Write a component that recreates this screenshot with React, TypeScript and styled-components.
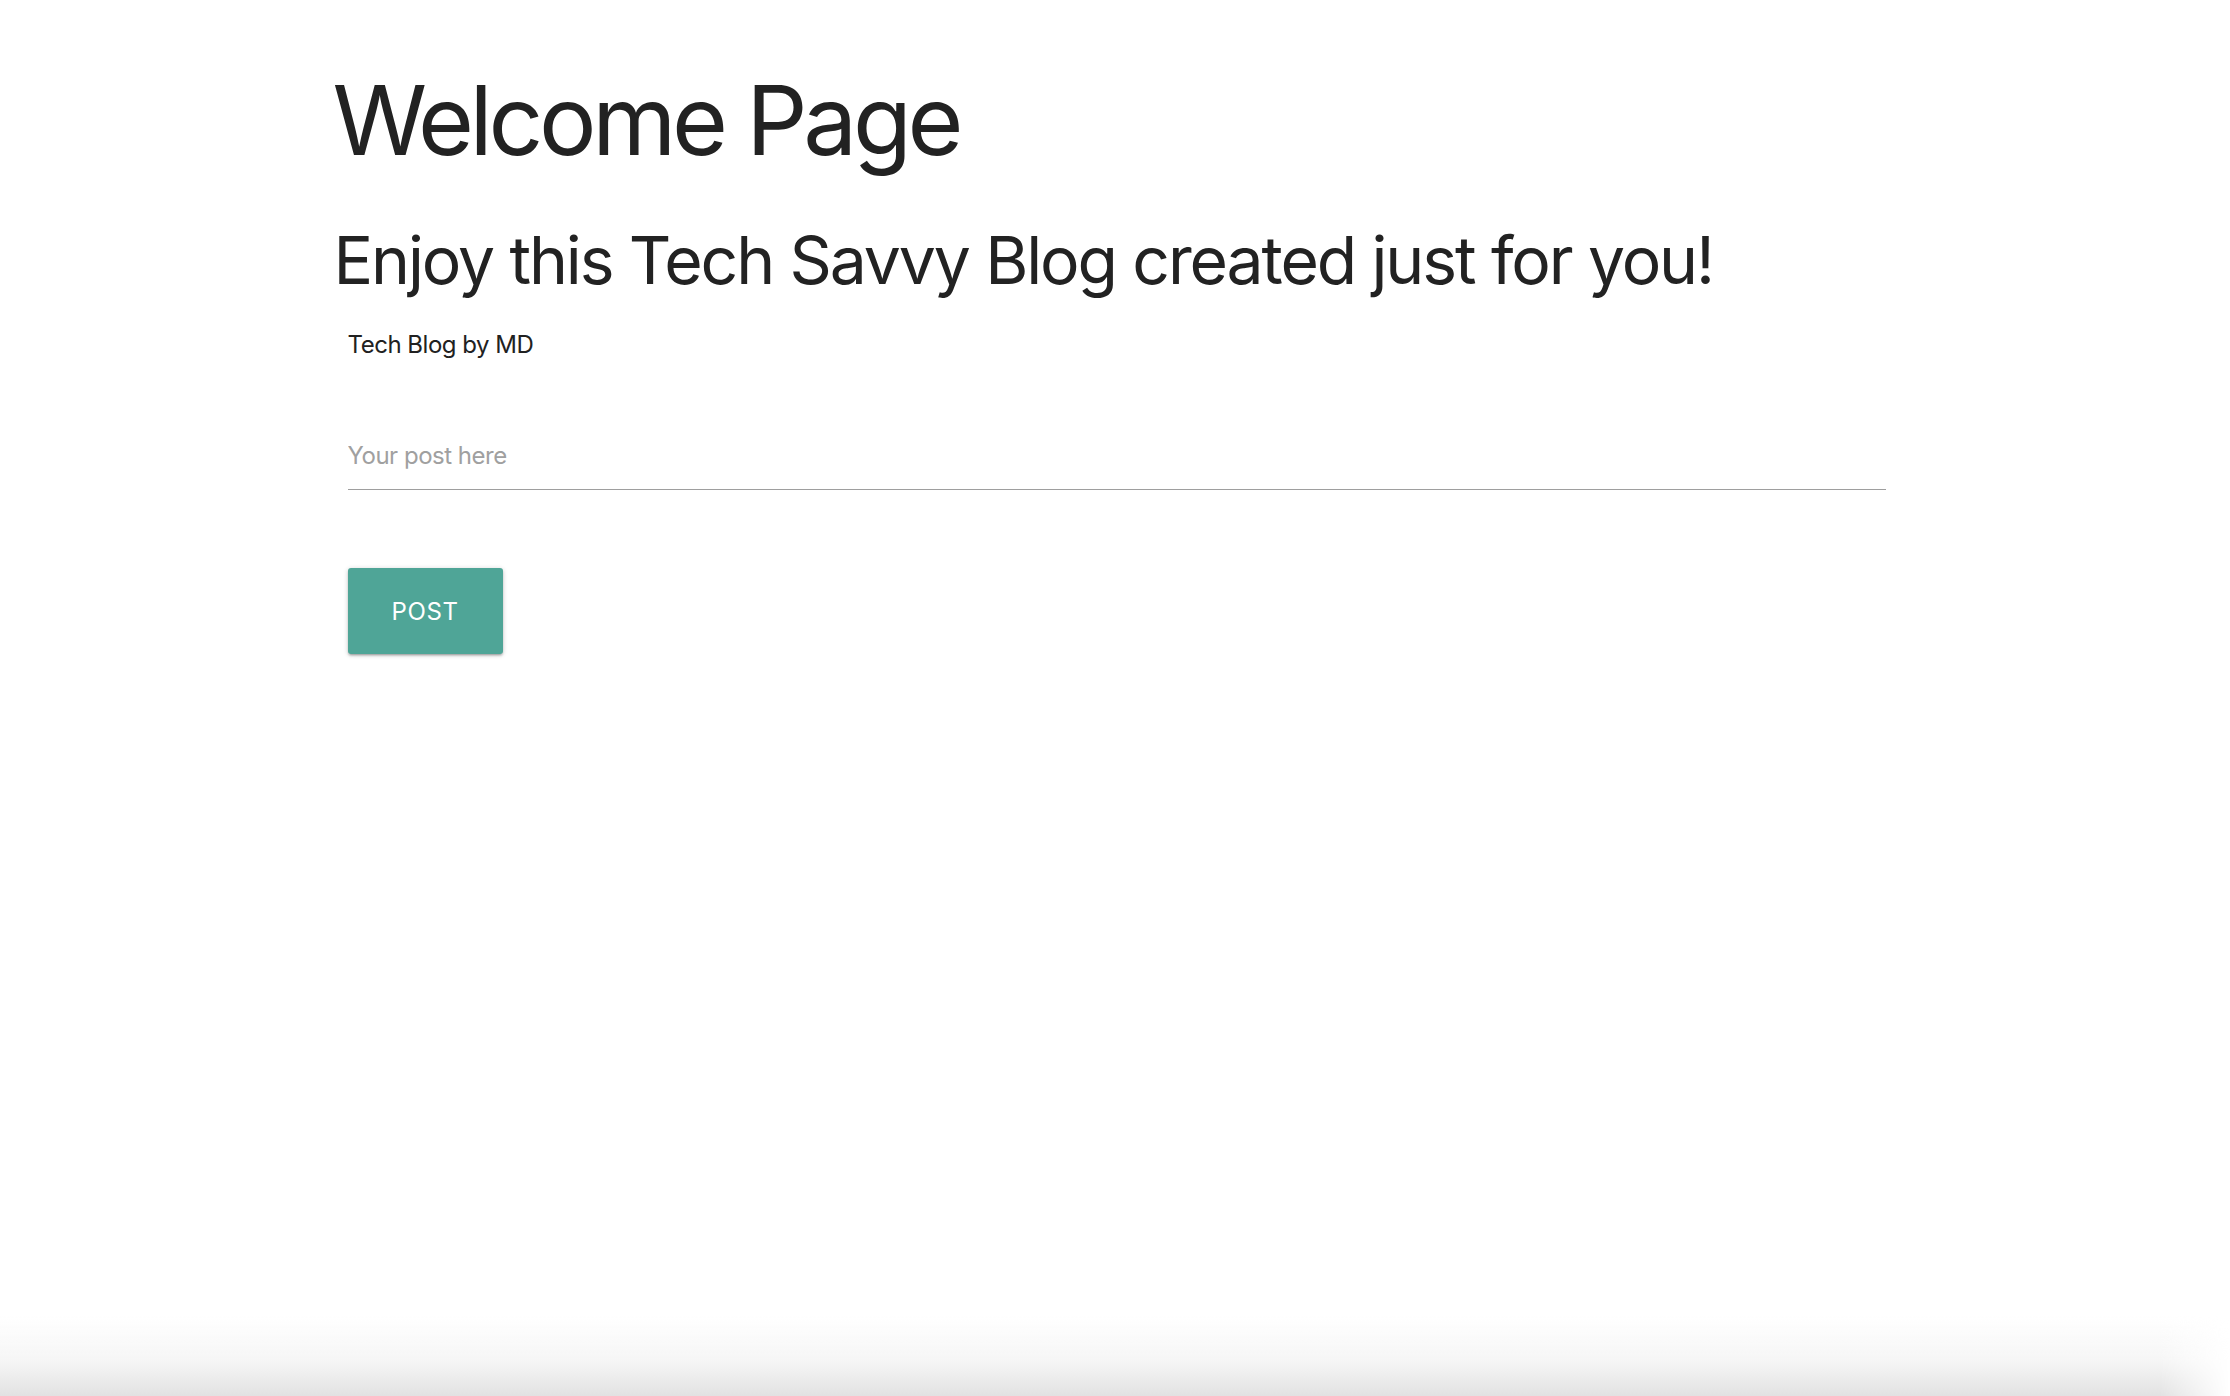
import React from "react";
import styled, { createGlobalStyle } from "styled-components";

const GlobalStyle = createGlobalStyle`
  html, body {
    margin: 0;
    padding: 0;
    background: #ffffff;
  }
  body {
    font-family: Inter, "Noto Sans", "Liberation Sans", sans-serif;
    color: #212121;
  }
  * { box-sizing: border-box; }
`;

const Page = styled.div`
  min-height: 100vh;
  display: flex;
  flex-direction: column;
`;

const Container = styled.main`
  width: 70%;
  margin: 0 auto;
  flex: 1;
`;

const Title = styled.h1`
  margin: 68px 0 0 -2px;
  font-size: 96px;
  font-weight: 400;
  line-height: 1.1;
  letter-spacing: -0.045em;
  color: #222222;
`;

const Subtitle = styled.h2`
  margin: 50px 0 0 -1px;
  font-size: 66px;
  font-weight: 400;
  line-height: 1.1;
  letter-spacing: -0.032em;
  color: #222222;
`;

const Column = styled.section`
  padding: 0 10px 0 13px;
`;

const Byline = styled.p`
  margin: 31px 0 0 0;
  font-size: 24px;
  line-height: 36px;
  letter-spacing: -0.02em;
  color: #212121;
`;

const PostForm = styled.form`
  display: flex;
  flex-direction: column;
  align-items: flex-start;
  margin-top: 58px;
`;

const PostInput = styled.input`
  width: 100%;
  height: 69px;
  padding: 0;
  border: none;
  border-bottom: 1px solid #9e9e9e;
  outline: none;
  background: transparent;
  font-family: inherit;
  font-size: 24px;
  letter-spacing: -0.02em;
  color: #212121;

  &::placeholder {
    color: #a0a0a0;
  }
`;

const PostButton = styled.button`
  margin-top: 78px;
  width: 155px;
  height: 86px;
  border: none;
  border-radius: 3px;
  background: #4fa597;
  color: #ffffff;
  font-family: inherit;
  font-size: 24px;
  font-weight: 400;
  letter-spacing: 0.6px;
  text-transform: uppercase;
  box-shadow: 0 2px 2px 0 rgba(0, 0, 0, 0.14), 0 3px 1px -2px rgba(0, 0, 0, 0.12),
    0 1px 5px 0 rgba(0, 0, 0, 0.2);
  cursor: pointer;
`;

const BottomShade = styled.div`
  height: 80px;
  background: linear-gradient(
    to bottom,
    rgba(255, 255, 255, 0) 0%,
    rgba(246, 246, 246, 1) 55%,
    rgba(226, 226, 226, 1) 100%
  );
  -webkit-mask-image: linear-gradient(to left, transparent 0px, #000 70px);
  mask-image: linear-gradient(to left, transparent 0px, #000 70px);
`;

export default function App() {
  return (
    <Page>
      <GlobalStyle />
      <Container>
        <Title>Welcome Page</Title>
        <Subtitle>Enjoy this Tech Savvy Blog created just for you!</Subtitle>
        <Column>
          <Byline>Tech Blog by MD</Byline>
          <PostForm onSubmit={(e) => e.preventDefault()}>
            <PostInput type="text" placeholder="Your post here" />
            <PostButton type="submit">Post</PostButton>
          </PostForm>
        </Column>
      </Container>
      <BottomShade />
    </Page>
  );
}
